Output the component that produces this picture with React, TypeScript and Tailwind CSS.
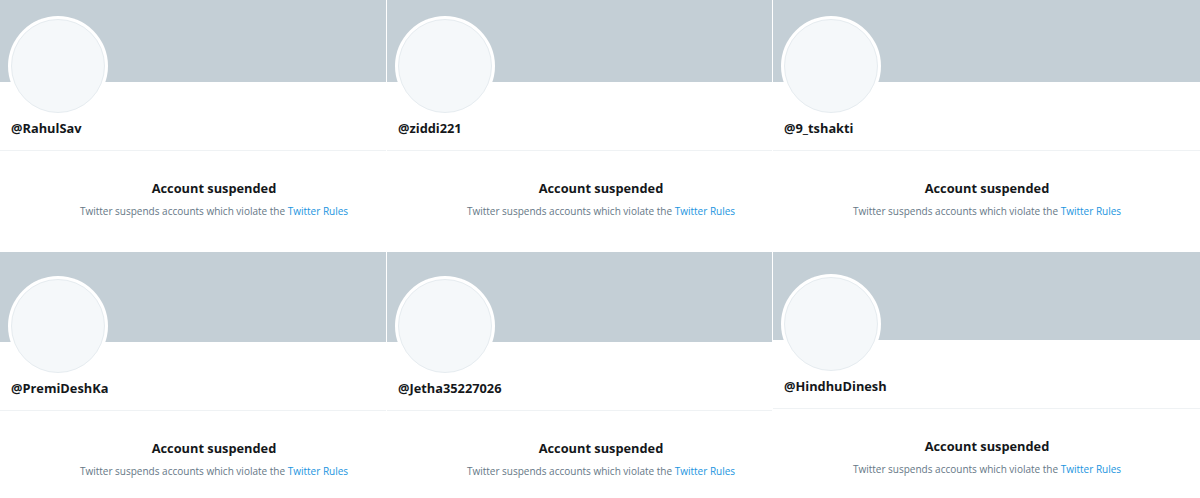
import React from 'react';

type Account = {
  handle: string;
  bannerH?: number;
};

const rows: Account[][] = [
  [{ handle: '@RahulSav' }, { handle: '@ziddi221' }, { handle: '@9_tshakti' }],
  [{ handle: '@PremiDeshKa' }, { handle: '@Jetha35227026' }, { handle: '@HindhuDinesh', bannerH: 88 }],
];

// each capture is 428px wide; the first two columns are cut on the right
const colWidths = ['w-[386px]', 'w-[385px]', 'flex-1'];

function SuspendedCard({ handle, bannerH = 90 }: Account) {
  return (
    <div className="w-[428px] h-[260px] bg-white">
      <div className="bg-[#c4cfd6]" style={{ height: bannerH }} />
      <div className="px-[8px]">
        <div className="-mt-[66px] w-[100px] h-[100px] rounded-full bg-white p-[3px]">
          <div className="w-full h-full rounded-full bg-[#f5f8fa] border border-[#e6ecf0]" />
        </div>
      </div>
      <div className="px-[11px] pt-[3px] pb-[13px] border-b border-[#eff2f4]">
        <p className="text-[12.8px] leading-[18px] font-bold text-[#14171a]">{handle}</p>
      </div>
      <div className="pt-[27px] flex flex-col items-center">
        <h2 className="text-[12.8px] leading-5 font-bold text-[#14171a]">Account suspended</h2>
        <p className="mt-[6px] text-[10px] leading-[14px] text-[#657786]">
          Twitter suspends accounts which violate the{' '}
          <span className="text-[#1b95e0]">Twitter Rules</span>
        </p>
      </div>
    </div>
  );
}

export default function App() {
  return (
    <div
      className="w-[1200px] h-[498px] overflow-hidden bg-white"
      style={{ fontFamily: '"Open Sans", "Noto Sans", sans-serif' }}
    >
      <div className="-mt-[8px] flex flex-col">
        {rows.map((row, r) => (
          <div key={r} className="flex gap-px">
            {row.map((acc, c) => (
              <div key={acc.handle} className={`${colWidths[c]} overflow-hidden`}>
                <SuspendedCard {...acc} />
              </div>
            ))}
          </div>
        ))}
      </div>
    </div>
  );
}
